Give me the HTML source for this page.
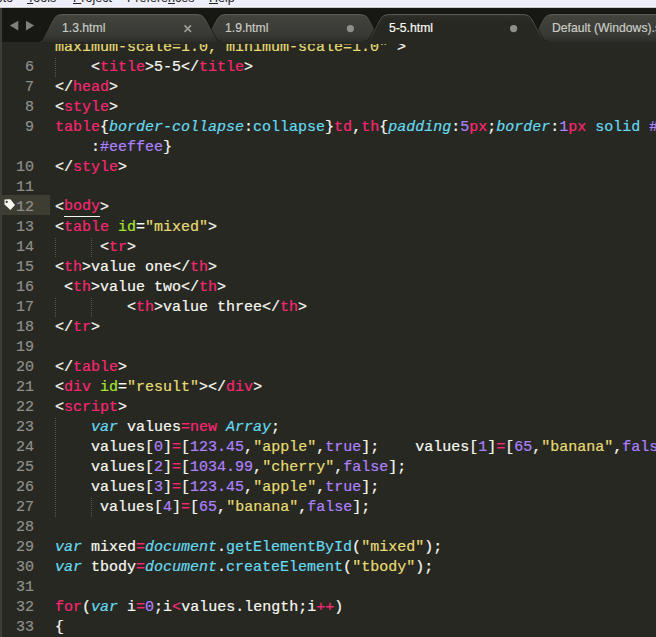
<!DOCTYPE html>
<html><head><meta charset="utf-8"><title>5-5.html</title>
<style>
html,body{margin:0;padding:0}
body{width:656px;height:637px;overflow:hidden;position:relative;background:#272822;font-family:"Liberation Sans",sans-serif}
#menu{position:absolute;left:0;top:0;width:656px;height:8px;background:linear-gradient(#eff0fb 0,#ebecf8 6px,#f6f6fc 6.5px,#f6f6fc 7.3px,#55564f 8px);overflow:hidden}
#menu span{position:absolute;top:-9px;font-size:12.5px;line-height:14px;color:#222;white-space:pre}
#tabs{position:absolute;left:0;top:8px;width:656px;height:34px;background:#171813;overflow:hidden}
#tabs svg{position:absolute;left:0;top:0}
#tabs .t{position:absolute;top:13px;font-size:12.2px;-webkit-text-stroke:0.2px;color:#c9ccc5;white-space:pre;line-height:14px}
#edge{position:absolute;left:0;top:8px;width:2px;height:629px;background:#3d3e3a}
#code{position:absolute;left:0;top:0;width:656px;height:637px;overflow:hidden;clip-path:inset(44px 0 0 0)}
.row{position:absolute;left:0;width:900px;height:20px;line-height:20px;font-family:"Liberation Mono",monospace;font-size:15px;color:#f8f8f2;white-space:pre;-webkit-text-stroke:0.2px}
.row.cur::before{content:"";position:absolute;left:2px;top:-3px;width:48px;height:20px;background:#3e3d32}
.ln{position:absolute;left:0;width:34px;text-align:right;color:#8f908a}
.cd{position:absolute;left:55px;top:0}
.gd{position:absolute;top:0;width:1px;height:20px;background-image:linear-gradient(#55564f 50%,transparent 50%);background-size:1px 2px}
.tagic{position:absolute;left:4px;top:1px}
.p{color:#f92672}.g{color:#a6e22e}.y{color:#e6db74}.b{color:#66d9ef;font-style:italic}.c{color:#66d9ef}.u{color:#ae81ff}
.ul{border-bottom:1px solid #f8f8f2;display:inline-block;line-height:16px;height:17px;vertical-align:top;margin-top:1px}
</style></head><body>
<div id="code">
<div class="row" style="top:38px"><span class="ln"></span><span class="cd"><span class="y">maximum-scale=1.0, minimum-scale=1.0"</span> &gt;</span></div>
<div class="row" style="top:58px"><span class="ln">6</span><i class="gd" style="left:55px"></i><span class="cd">    &lt;<span class="p">title</span>&gt;5-5&lt;/<span class="p">title</span>&gt;</span></div>
<div class="row" style="top:78px"><span class="ln">7</span><span class="cd">&lt;/<span class="p">head</span>&gt;</span></div>
<div class="row" style="top:98px"><span class="ln">8</span><span class="cd">&lt;<span class="p">style</span>&gt;</span></div>
<div class="row" style="top:118px"><span class="ln">9</span><span class="cd"><span class="p">table</span>{<span class="b">border-collapse</span>:<span class="c">collapse</span>}<span class="p">td</span>,<span class="p">th</span>{<span class="b">padding</span>:<span class="u">5</span><span class="p">px</span>;<span class="b">border</span>:<span class="u">1</span><span class="p">px</span> <span class="c">solid</span> <span class="u">#cccccc</span></span></div>
<div class="row" style="top:138px"><span class="ln"></span><span class="cd">    :<span class="u">#eeffee</span>}</span></div>
<div class="row" style="top:158px"><span class="ln">10</span><span class="cd">&lt;/<span class="p">style</span>&gt;</span></div>
<div class="row" style="top:178px"><span class="ln">11</span><span class="cd"></span></div>
<div class="row cur" style="top:198px"><svg class="tagic" width="14" height="12" viewBox="0 0 14 12"><path d="M0.500 0.400 L6.400 0.300 L11 6 L6.400 11 L0.500 5.600 Z" fill="#f8f8f2"/><circle cx="2.700" cy="2.900" r="1.100" fill="#3e3d32"/></svg><span class="ln">12</span><span class="cd">&lt;<span class="p ul">body</span>&gt;</span></div>
<div class="row" style="top:218px"><span class="ln">13</span><span class="cd">&lt;<span class="p">table</span> <span class="g">id</span>=<span class="y">"mixed"</span>&gt;</span></div>
<div class="row" style="top:238px"><span class="ln">14</span><i class="gd" style="left:55px"></i><i class="gd" style="left:91px"></i><span class="cd">     &lt;<span class="p">tr</span>&gt;</span></div>
<div class="row" style="top:258px"><span class="ln">15</span><span class="cd">&lt;<span class="p">th</span>&gt;value one&lt;/<span class="p">th</span>&gt;</span></div>
<div class="row" style="top:278px"><span class="ln">16</span><span class="cd"> &lt;<span class="p">th</span>&gt;value two&lt;/<span class="p">th</span>&gt;</span></div>
<div class="row" style="top:298px"><span class="ln">17</span><i class="gd" style="left:55px"></i><i class="gd" style="left:91px"></i><span class="cd">        &lt;<span class="p">th</span>&gt;value three&lt;/<span class="p">th</span>&gt;</span></div>
<div class="row" style="top:318px"><span class="ln">18</span><span class="cd">&lt;/<span class="p">tr</span>&gt;</span></div>
<div class="row" style="top:338px"><span class="ln">19</span><span class="cd"></span></div>
<div class="row" style="top:358px"><span class="ln">20</span><span class="cd">&lt;/<span class="p">table</span>&gt;</span></div>
<div class="row" style="top:378px"><span class="ln">21</span><span class="cd">&lt;<span class="p">div</span> <span class="g">id</span>=<span class="y">"result"</span>&gt;&lt;/<span class="p">div</span>&gt;</span></div>
<div class="row" style="top:398px"><span class="ln">22</span><span class="cd">&lt;<span class="p">script</span>&gt;</span></div>
<div class="row" style="top:418px"><span class="ln">23</span><i class="gd" style="left:55px"></i><span class="cd">    <span class="b">var</span> values<span class="p">=new</span> <span class="b">Array</span>;</span></div>
<div class="row" style="top:438px"><span class="ln">24</span><i class="gd" style="left:55px"></i><span class="cd">    values[<span class="u">0</span>]<span class="p">=</span>[<span class="u">123.45</span>,<span class="y">"apple"</span>,<span class="u">true</span>];    values[<span class="u">1</span>]<span class="p">=</span>[<span class="u">65</span>,<span class="y">"banana"</span>,<span class="u">false</span>];</span></div>
<div class="row" style="top:458px"><span class="ln">25</span><i class="gd" style="left:55px"></i><span class="cd">    values[<span class="u">2</span>]<span class="p">=</span>[<span class="u">1034.99</span>,<span class="y">"cherry"</span>,<span class="u">false</span>];</span></div>
<div class="row" style="top:478px"><span class="ln">26</span><i class="gd" style="left:55px"></i><span class="cd">    values[<span class="u">3</span>]<span class="p">=</span>[<span class="u">123.45</span>,<span class="y">"apple"</span>,<span class="u">true</span>];</span></div>
<div class="row" style="top:498px"><span class="ln">27</span><i class="gd" style="left:55px"></i><i class="gd" style="left:91px"></i><span class="cd">     values[<span class="u">4</span>]<span class="p">=</span>[<span class="u">65</span>,<span class="y">"banana"</span>,<span class="u">false</span>];</span></div>
<div class="row" style="top:518px"><span class="ln">28</span><span class="cd"></span></div>
<div class="row" style="top:538px"><span class="ln">29</span><span class="cd"><span class="b">var</span> mixed<span class="p">=</span><span class="b">document</span>.<span class="c">getElementById</span>(<span class="y">"mixed"</span>);</span></div>
<div class="row" style="top:558px"><span class="ln">30</span><span class="cd"><span class="b">var</span> tbody<span class="p">=</span><span class="b">document</span>.<span class="c">createElement</span>(<span class="y">"tbody"</span>);</span></div>
<div class="row" style="top:578px"><span class="ln">31</span><span class="cd"></span></div>
<div class="row" style="top:598px"><span class="ln">32</span><span class="cd"><span class="p">for</span>(<span class="b">var</span> i<span class="p">=</span><span class="u">0</span>;i<span class="p">&lt;</span>values.length;i<span class="p">++</span>)</span></div>
<div class="row" style="top:618px"><span class="ln">33</span><span class="cd">{</span></div>
</div>
<div id="menu"><span style="left:-14px">Goto</span><span style="left:27px"><u>T</u>ools</span><span style="left:73px"><u>P</u>roject</span><span style="left:127px">Prefere<u>n</u>ces</span><span style="left:209px"><u>H</u>elp</span></div>
<div id="tabs">
<svg width="656" height="34" viewBox="0 8 656 34">
 <defs>
  <linearGradient id="tg" x1="0" y1="14" x2="0" y2="42" gradientUnits="userSpaceOnUse"><stop offset="0" stop-color="#55564f"/><stop offset="0.06" stop-color="#42433d"/><stop offset="0.75" stop-color="#383934"/><stop offset="1" stop-color="#2c2d28"/></linearGradient>
  <linearGradient id="ta" x1="0" y1="14" x2="0" y2="42" gradientUnits="userSpaceOnUse"><stop offset="0" stop-color="#4a4b44"/><stop offset="0.06" stop-color="#2d2e28"/><stop offset="0.3" stop-color="#272822"/><stop offset="1" stop-color="#272822"/></linearGradient>
  <linearGradient id="sg" x1="0" y1="14" x2="0" y2="42" gradientUnits="userSpaceOnUse"><stop offset="0" stop-color="#5d5e58"/><stop offset="0.35" stop-color="#484943"/><stop offset="1" stop-color="#2e2f2a"/></linearGradient>
 </defs>
 <path d="M528.0 42.5 C530.5 42 532.0 41.5 533.2 39.5 L543.7 19.5 C545.6 16 548.0 14.5 554.0 14.5 L685.0 14.5 C691.0 14.5 693.4 16 695.3 19.5 L705.8 39.5 C707.0 41.5 708.5 42 711.0 42.5" fill="none" stroke="#11120d" stroke-opacity="0.55" stroke-width="3"/><path d="M528.0 42.5 C530.5 42 532.0 41.5 533.2 39.5 L543.7 19.5 C545.6 16 548.0 14.5 554.0 14.5 L685.0 14.5 C691.0 14.5 693.4 16 695.3 19.5 L705.8 39.5 C707.0 41.5 708.5 42 711.0 42.5 Z" fill="url(#tg)"/><path d="M528.0 42.5 C530.5 42 532.0 41.5 533.2 39.5 L543.7 19.5 C545.6 16 548.0 14.5 554.0 14.5 L685.0 14.5 C691.0 14.5 693.4 16 695.3 19.5 L705.8 39.5 C707.0 41.5 708.5 42 711.0 42.5" fill="none" stroke="url(#sg)" stroke-width="1"/>
 <path d="M201.3 42.5 C203.8 42 205.3 41.5 206.5 39.5 L217.0 19.5 C218.9 16 221.3 14.5 227.3 14.5 L358.3 14.5 C364.3 14.5 366.7 16 368.6 19.5 L379.1 39.5 C380.3 41.5 381.8 42 384.3 42.5" fill="none" stroke="#11120d" stroke-opacity="0.55" stroke-width="3"/><path d="M201.3 42.5 C203.8 42 205.3 41.5 206.5 39.5 L217.0 19.5 C218.9 16 221.3 14.5 227.3 14.5 L358.3 14.5 C364.3 14.5 366.7 16 368.6 19.5 L379.1 39.5 C380.3 41.5 381.8 42 384.3 42.5 Z" fill="url(#tg)"/><path d="M201.3 42.5 C203.8 42 205.3 41.5 206.5 39.5 L217.0 19.5 C218.9 16 221.3 14.5 227.3 14.5 L358.3 14.5 C364.3 14.5 366.7 16 368.6 19.5 L379.1 39.5 C380.3 41.5 381.8 42 384.3 42.5" fill="none" stroke="url(#sg)" stroke-width="1"/>
 <path d="M38.0 42.5 C40.5 42 42.0 41.5 43.2 39.5 L53.7 19.5 C55.6 16 58.0 14.5 64.0 14.5 L195.0 14.5 C201.0 14.5 203.4 16 205.3 19.5 L215.8 39.5 C217.0 41.5 218.5 42 221.0 42.5" fill="none" stroke="#11120d" stroke-opacity="0.55" stroke-width="3"/><path d="M38.0 42.5 C40.5 42 42.0 41.5 43.2 39.5 L53.7 19.5 C55.6 16 58.0 14.5 64.0 14.5 L195.0 14.5 C201.0 14.5 203.4 16 205.3 19.5 L215.8 39.5 C217.0 41.5 218.5 42 221.0 42.5 Z" fill="url(#tg)"/><path d="M38.0 42.5 C40.5 42 42.0 41.5 43.2 39.5 L53.7 19.5 C55.6 16 58.0 14.5 64.0 14.5 L195.0 14.5 C201.0 14.5 203.4 16 205.3 19.5 L215.8 39.5 C217.0 41.5 218.5 42 221.0 42.5" fill="none" stroke="url(#sg)" stroke-width="1"/>
 <path d="M364.6 42.5 C367.1 42 368.6 41.5 369.8 39.5 L380.3 19.5 C382.2 16 384.6 14.5 390.6 14.5 L521.6 14.5 C527.6 14.5 530.0 16 531.9 19.5 L542.4 39.5 C543.6 41.5 545.1 42 547.6 42.5" fill="none" stroke="#11120d" stroke-opacity="0.55" stroke-width="3"/><path d="M364.6 42.5 C367.1 42 368.6 41.5 369.8 39.5 L380.3 19.5 C382.2 16 384.6 14.5 390.6 14.5 L521.6 14.5 C527.6 14.5 530.0 16 531.9 19.5 L542.4 39.5 C543.6 41.5 545.1 42 547.6 42.5 Z" fill="url(#ta)"/><path d="M364.6 42.5 C367.1 42 368.6 41.5 369.8 39.5 L380.3 19.5 C382.2 16 384.6 14.5 390.6 14.5 L521.6 14.5 C527.6 14.5 530.0 16 531.9 19.5 L542.4 39.5 C543.6 41.5 545.1 42 547.6 42.5" fill="none" stroke="url(#sg)" stroke-width="1"/>
 <path d="M9.800 25.600 L18.300 20.800 L18.300 30.400 Z M34.200 25.600 L26 20.800 L26 30.400 Z" fill="#7f817a"/>
 <circle cx="350.400" cy="28.600" r="3.600" fill="#8d8f88"/>
 <circle cx="513.600" cy="28.600" r="3.600" fill="#8d8f88"/>
 <path d="M184.500 25.300 L191 31.800 M191 25.300 L184.500 31.800" stroke="#9a9c95" stroke-width="1.700"/>
</svg>
<span class="t" style="left:62px">1.3.html</span>
<span class="t" style="left:225px">1.9.html</span>
<span class="t" style="left:389px;color:#f8f8f2">5-5.html</span>
<span class="t" style="left:552px">Default (Windows).sublime-keymap</span>
</div>
<div id="edge"></div>
</body></html>
